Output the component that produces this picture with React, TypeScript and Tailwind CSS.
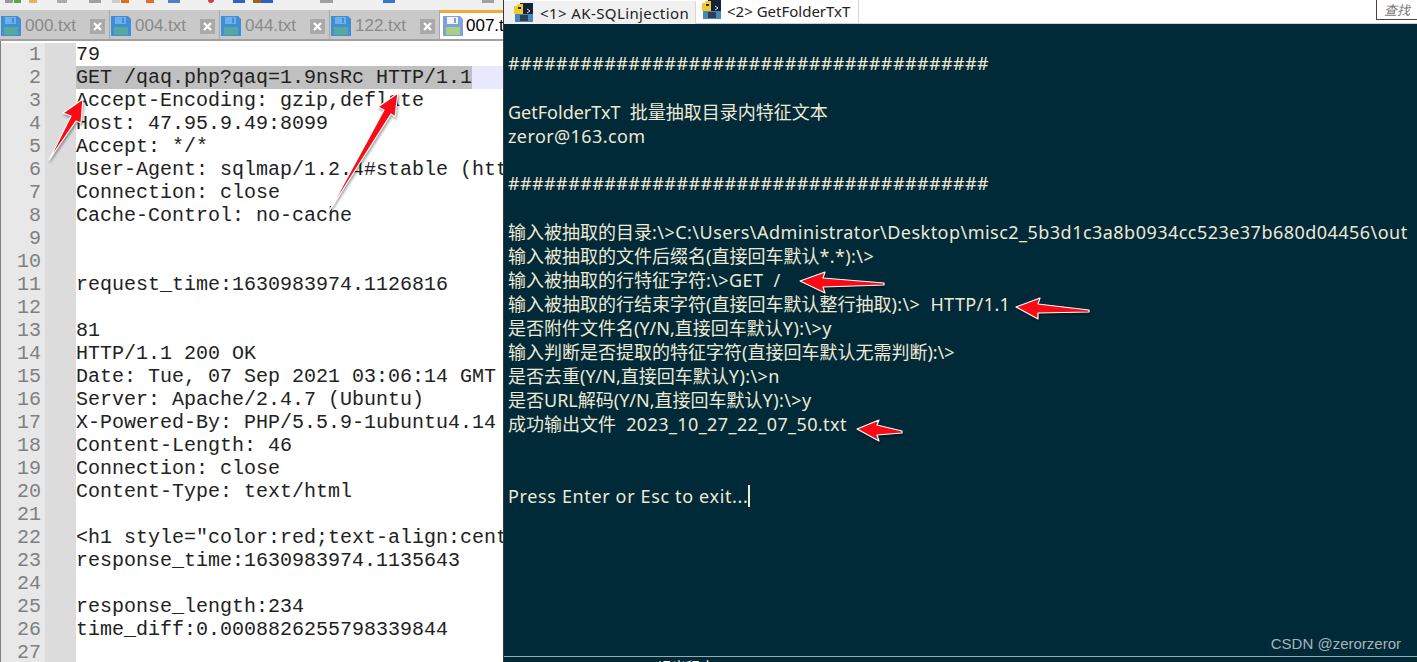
const lines: string[] = [
  "79",
  "GET /qaq.php?qaq=1.9nsRc HTTP/1.1",
  "Accept-Encoding: gzip,deflate",
  "Host: 47.95.9.49:8099",
  "Accept: */*",
  "User-Agent: sqlmap/1.2.4#stable (http://sqlmap.org)",
  "Connection: close",
  "Cache-Control: no-cache",
  "",
  "",
  "request_time:1630983974.1126816",
  "",
  "81",
  "HTTP/1.1 200 OK",
  "Date: Tue, 07 Sep 2021 03:06:14 GMT",
  "Server: Apache/2.4.7 (Ubuntu)",
  "X-Powered-By: PHP/5.5.9-1ubuntu4.14",
  "Content-Length: 46",
  "Connection: close",
  "Content-Type: text/html",
  "",
  '<h1 style="color:red;text-align:center">',
  "response_time:1630983974.1135643",
  "",
  "response_length:234",
  "time_diff:0.0008826255798339844",
  "",
];

const hashes = "#".repeat(40);
const consoleLines: string[] = [
  "",
  hashes,
  "",
  "TITLE",
  "zeror@163.com",
  "",
  hashes,
  "",
  "输入被抽取的目录:\\>C:\\Users\\Administrator\\Desktop\\misc2_5b3d1c3a8b0934cc523e37b680d04456\\out",
  "输入被抽取的文件后缀名(直接回车默认*.*):\\>",
  "输入被抽取的行特征字符:\\>GET  /",
  "输入被抽取的行结束字符(直接回车默认整行抽取):\\>  HTTP/1.1",
  "是否附件文件名(Y/N,直接回车默认Y):\\>y",
  "输入判断是否提取的特征字符(直接回车默认无需判断):\\>",
  "是否去重(Y/N,直接回车默认Y):\\>n",
  "是否URL解码(Y/N,直接回车默认Y):\\>y",
  "成功输出文件  2023_10_27_22_07_50.txt",
  "",
  "",
];

function ConsoleText({ text }: { text: string }) {
  if (text === "TITLE") return <>GetFolderTxT  批量抽取目录内特征文本</>;
  const parts = text.split(/([\x00-\x7f]{6,})/);
  return (
    <>
      {parts.map((p, i) =>
        i % 2 === 1 ? (
          <span key={i} className={p.length > 40 && p[0] !== "#" ? "tracking-[0.47px]" : "tracking-[0.4px]"}>{p}</span>
        ) : (
          <span key={i}>{p}</span>
        ),
      )}
    </>
  );
}

function Floppy({ active }: { active?: boolean }) {
  return (
    <svg width="20" height="20" viewBox="0 0 20 20" className="shrink-0">
      <path d="M0 0H17L20 3V20H0Z" fill={active ? "#7f9fe0" : "#3c8fd8"} />
      <rect x="4" y="1" width="11" height="7" fill={active ? "#f2f4fa" : "#6fb0e6"} />
      <rect x="11" y="2" width="2" height="5" fill={active ? "#7f9fe0" : "#3c8fd8"} />
      <rect x="3" y="11" width="14" height="8" fill={active ? "#a8d080" : "#58a8a0"} />
    </svg>
  );
}

function ConsoleIcon() {
  return (
    <svg width="20" height="20" viewBox="0 0 20 20" className="shrink-0">
      <rect x="6" y="0" width="13" height="14" fill="#14233a" />
      <path d="M0 3H3L4 1H9V11H0Z" fill="#f0c828" />
      <rect x="4" y="4" width="3" height="2" fill="#20304a" />
      <path d="M13 6l3 2-3 2" fill="none" stroke="#e0e0e0" strokeWidth="1" />
      <rect x="1" y="11" width="18" height="8" fill="#4a86b8" />
      <rect x="6" y="12" width="8" height="6" fill="#2c3e58" />
    </svg>
  );
}

function EditorTab({ name }: { name: string }) {
  return (
    <div className="w-[110px] h-[29px] flex items-center pt-[3px] pl-[1px] pr-[4px] border-r border-[#a8a8a8] bg-[#c9c9c9] shrink-0">
      <Floppy />
      <span className="ml-[4px] flex-1 text-[#8a8a8a] text-[17px]">{name}</span>
      <svg width="15" height="15" viewBox="0 0 15 15" className="shrink-0">
        <rect width="15" height="15" fill="#a9a9a9" />
        <path d="M4 4L11 11M11 4L4 11" stroke="#ffffff" strokeWidth="2.4" />
      </svg>
    </div>
  );
}

function Arrow({ points }: { points: string }) {
  return (
    <polygon
      points={points}
      fill="#fa0a14"
      stroke="#ffffff"
      strokeWidth="1.2"
      strokeLinejoin="round"
      style={{ filter: "drop-shadow(1px 2px 1px rgba(0,0,0,0.35))" }}
    />
  );
}

export default function App() {
  return (
    <div className="relative w-[1417px] h-[662px] overflow-hidden flex bg-white font-['Liberation_Sans',sans-serif]">
      {/* Left: text editor */}
      <div className="w-[504px] h-full flex flex-col shrink-0 overflow-hidden border-r border-[#3a3a3a]">
        <div className="h-[10px] bg-[#f0f0f0] shrink-0 overflow-hidden">
          <svg width="503" height="4">
            <rect x="5" y="0" width="8" height="3" fill="#9a9a9a" />
            <rect x="14" y="0" width="7" height="3" fill="#58a848" />
            <rect x="29" y="0" width="8" height="3" fill="#e8b060" />
            <rect x="57" y="0" width="10" height="3" fill="#aaaaaa" />
            <rect x="89" y="0" width="12" height="3" fill="#a0a0a0" />
            <rect x="112" y="0" width="8" height="3" fill="#cccccc" />
            <rect x="121" y="0" width="8" height="3" fill="#d87020" />
            <rect x="146" y="0" width="8" height="3" fill="#e07030" />
            <rect x="168" y="0" width="12" height="3" fill="#5080c0" />
            <circle cx="211" cy="0" r="3" fill="#d04040" />
            <rect x="233" y="0" width="12" height="3" fill="#3060c0" />
            <rect x="253" y="0" width="8" height="3" fill="#a06020" />
            <rect x="261" y="0" width="12" height="3" fill="#3060c0" />
            <rect x="320" y="0" width="13" height="3" fill="#a0a0a0" />
            <rect x="383" y="0" width="12" height="3" fill="#3878c8" />
            <rect x="482" y="0" width="12" height="3" fill="#a0a0a0" />
          </svg>
        </div>
        <div className="h-[31px] flex items-end bg-[#f0f0f0] border-b-2 border-[#a0a0a0] shrink-0 overflow-hidden">
          <EditorTab name="000.txt" />
          <EditorTab name="004.txt" />
          <EditorTab name="044.txt" />
          <EditorTab name="122.txt" />
          <div className="h-[31px] flex-1 bg-white border-t-[5px] border-[#f4a83a] flex items-center pl-[3px] mt-[-2px]">
            <Floppy active />
            <span className="ml-[3px] text-[17px] text-black whitespace-nowrap">007.txt</span>
          </div>
        </div>
        <div className="flex-1 pt-[2px] font-['Liberation_Mono',monospace] text-[20px] leading-[23px] text-[#222222] overflow-hidden border-l border-[#808080]">
          {lines.map((l, i) => (
            <div key={i} className={`flex h-[23px] whitespace-pre ${i === 1 ? "bg-[#e8e8ff]" : ""}`}>
              <div className="w-[44px] shrink-0 bg-[#e8e8e8] text-[#808080] text-right pr-[4px]">{i + 1}</div>
              <div className="w-[31px] shrink-0 bg-[#dcdcdc]" />
              <div className={i === 1 ? "bg-[#c0c0c0]" : ""}>{l}</div>
            </div>
          ))}
        </div>
      </div>

      {/* Right: console */}
      <div className="flex-1 h-full flex flex-col min-w-0">
        <div className="h-[24px] shrink-0 flex bg-white border-b border-[#d0d0d0] font-['Noto_Sans','Noto_Sans_CJK_SC',sans-serif] text-[15px] text-[#222222] relative">
          <div className="w-[192px] h-[23px] mt-[1px] pt-[1px] bg-[#f0f0f0] border-r border-[#d8d8d8] flex items-center pl-[10px] gap-[6px] whitespace-nowrap">
            <ConsoleIcon />
            <span className="tracking-[0.4px]">&lt;1&gt; AK-SQLinjection</span>
          </div>
          <div className="w-[163px] bg-white border-r border-[#d8d8d8] flex items-start pl-[6px] gap-[5px] whitespace-nowrap">
            <ConsoleIcon />
            <span className="leading-[22px]">&lt;2&gt; GetFolderTxT</span>
          </div>
          <div className="absolute right-0 top-0 w-[41px] h-[20px] border-l border-b border-[#444444] bg-white text-[#777777] italic text-[13px] leading-[19px] text-center font-['Noto_Sans_CJK_SC',sans-serif]">查找</div>
        </div>
        <div className="flex-1 bg-[#012a38] text-[#eee8d5] pl-[4px] pt-[4px] text-[18px] leading-[24px] font-['Noto_Sans','Noto_Sans_CJK_SC',sans-serif] relative overflow-hidden whitespace-pre">
          {consoleLines.map((l, i) => (
            <div key={i} className={l === hashes ? "h-[24px] leading-[22px]" : "h-[24px]"}>
              <ConsoleText text={l} />
            </div>
          ))}
          <div className="h-[24px] flex items-center">
            <span className="tracking-[0.64px]">Press Enter or Esc to exit...</span>
            <span className="w-[2px] h-[22px] bg-[#eee8d5]" />
          </div>
          <div className="absolute right-[16px] bottom-[2px] text-[15px] leading-[20px] text-[#a8b4b8] font-['Liberation_Sans',sans-serif]">CSDN @zerorzeror</div>
        </div>
        <div className="h-[6px] shrink-0 bg-[#012a38] border-t border-[#9aa8a8] overflow-hidden relative">
          <span className="absolute left-[154px] top-[1px] text-[14px] leading-[16px] text-white font-['Noto_Sans_CJK_SC',sans-serif]">退出程序</span>
        </div>
      </div>

      {/* Annotation arrows */}
      <svg className="absolute inset-0 pointer-events-none" width="1417" height="662">
        <Arrow points="83,99 63,113 71,116 49,160 76,121 81,123" />
        <Arrow points="398,93 378,107 384,110 328,213 391,114 395,117" />
        <Arrow points="800,281 825,272 823,278 884,283 884,285 823,287 825,293" />
        <Arrow points="1016,307 1040,298 1038,304 1089,310 1089,312 1038,313 1038,319" />
        <Arrow points="857,429 879,420 877,425 902,431 902,433 877,435 879,441" />
      </svg>
    </div>
  );
}
